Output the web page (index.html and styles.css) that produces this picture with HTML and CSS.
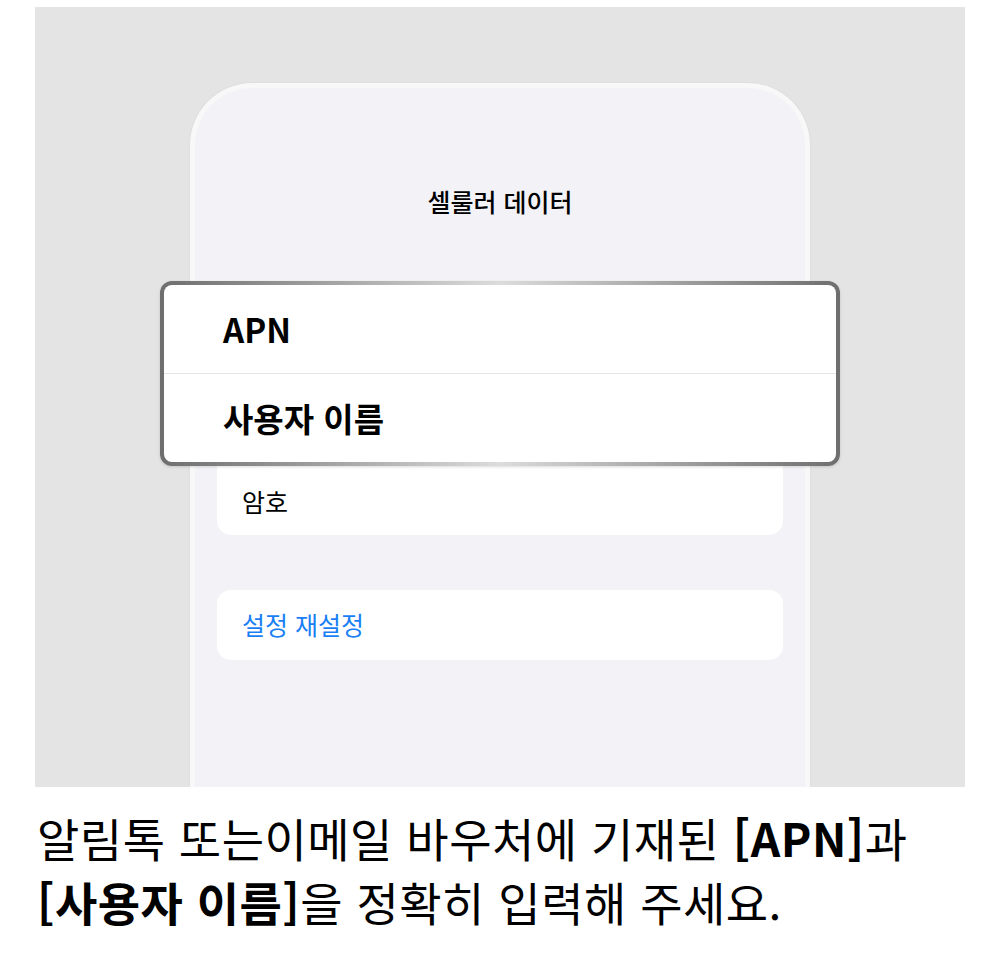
FILE: index.html
```html
<!DOCTYPE html>
<html lang="ko">
<head>
    <meta charset="UTF-8">
    <meta name="viewport" content="width=device-width, initial-scale=1.0">
    <title>셀룰러 데이터 안내</title>
    <link rel="stylesheet" href="styles.css">
</head>
<body>
    <div class="panel">
        <div class="phone">
            <h2 class="title">셀룰러 데이터</h2>

            <div class="focus">
                <div class="focus-inner">
                    <div class="row">APN</div>
                    <div class="row">사용자 이름</div>
                </div>
            </div>

            <div class="card card-under">
                <div class="item">암호</div>
            </div>

            <div class="card">
                <div class="item link">설정 재설정</div>
            </div>
        </div>
    </div>

    <p class="caption">알림톡 또는이메일 바우처에 기재된 <strong>[APN]</strong>과<br><strong>[사용자 이름]</strong>을 정확히 입력해 주세요.</p>
</body>
</html>
```

FILE: styles.css
```css
body {
    margin: 0;
    padding: 7px 35px 0;
    background: #fff;
    font-family: "Noto Sans CJK KR", "Noto Sans", sans-serif;
    color: #000;
}
.panel {
    background: #e4e4e4;
    height: 780px;
    padding-top: 76px;
    box-sizing: border-box;
    overflow: hidden;
}
.phone {
    width: 620px;
    height: 704px;
    margin: 0 auto;
    box-sizing: border-box;
    background: #f2f2f7;
    border: 5px solid #f8f8f9;
    border-bottom: none;
    border-radius: 62px 62px 0 0;
    box-shadow: 0 0 2px rgba(0, 0, 0, 0.08);
    padding: 97px 22px 0;
}
.title {
    margin: 0;
    font-size: 25px;
    line-height: 32px;
    font-weight: 500;
    text-align: center;
}
.focus {
    margin: 64px -57px 0;
    padding: 4px;
    border-radius: 12px;
    background: linear-gradient(90deg, #6e6e6e, #9c9c9c 22%, #dcdcdc 50%, #9c9c9c 78%, #6e6e6e);
    box-shadow: 0 1px 3px rgba(0, 0, 0, 0.15);
    position: relative;
    z-index: 1;
}
.focus-inner {
    background: #fff;
    border-radius: 8px;
}
.row {
    height: 88px;
    display: flex;
    align-items: center;
    padding-left: 59px;
    font-size: 33px;
    font-weight: 700;
}
.row + .row {
    border-top: 1px solid #e6e6e8;
}
.card {
    background: #fff;
    border-radius: 14px;
    margin-top: 55px;
}
.card-under {
    margin-top: 0;
    border-radius: 0 0 14px 14px;
}
.item {
    height: 69px;
    display: flex;
    align-items: center;
    padding-left: 25px;
    font-size: 25px;
}
.card + .card .item {
    height: 70px;
    padding-bottom: 3px;
    box-sizing: border-box;
}
.link {
    color: #1a7ff5;
}
.caption {
    margin: 18px 0 0 2px;
    font-size: 46px;
    line-height: 64px;
    letter-spacing: 0.5px;
    font-weight: 400;
}
.caption strong {
    font-weight: 700;
}
```
